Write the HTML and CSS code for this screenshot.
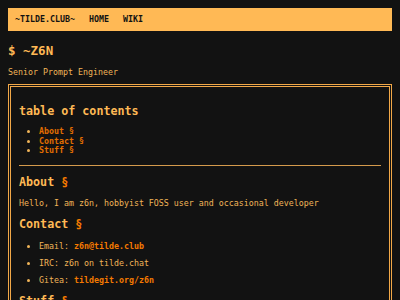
FILE: index.html
```html
<!DOCTYPE html>
<html lang="en">

<head>
    <meta charset="UTF-8">
    <meta name="viewport" content="width=device-width, initial-scale=1.0">
    <title>~z6n</title>
    <link rel="stylesheet" href="styles.css">
</head>

<body>
    <nav class="topbar">
        <a href="#">~tilde.club~</a>
        <a href="#">home</a>
        <a href="#">wiki</a>
    </nav>

    <h1 class="title">$ ~Z6N</h1>
    <p class="tagline">Senior Prompt Engineer</p>

    <main class="frame">
        <h2>table of contents</h2>
        <ul class="toc">
            <li><a href="#about">About §</a></li>
            <li><a href="#contact">Contact §</a></li>
            <li><a href="#stuff">Stuff §</a></li>
        </ul>

        <hr>

        <h2 id="about">About <a class="anchor" href="#about">§</a></h2>
        <p>Hello, I am z6n, hobbyist FOSS user and occasional developer</p>

        <h2 id="contact">Contact <a class="anchor" href="#contact">§</a></h2>
        <ul class="contact">
            <li>Email: <a href="#">z6n@tilde.club</a></li>
            <li>IRC: z6n on tilde.chat</li>
            <li>Gitea: <a href="#">tildegit.org/z6n</a></li>
        </ul>

        <h2 id="stuff">Stuff <a class="anchor" href="#stuff">§</a></h2>
        <p>Things I made or keep around.</p>
    </main>
</body>

</html>
```

FILE: styles.css
```css
:root {
    --background-color: #121212;
    --accent: #ffb955;
    --text-color: #f0b458;
    --link-color: #f57a00;
    --toc-link-color: #e26e00;
    --border-color: #f2a848;
    --rule-color: #d49a4c;
}

body {
    margin: 8px;
    background-color: var(--background-color);
    color: var(--text-color);
    font-family: "DejaVu Sans Mono", monospace;
    font-size: 8.3px;
}

a {
    color: var(--link-color);
    font-weight: bold;
    text-decoration: none;
}

.topbar {
    display: flex;
    gap: 14px;
    background-color: var(--accent);
    padding: 6px 7px 7px;
}

.topbar a {
    color: #111;
    text-transform: uppercase;
}

.title {
    color: var(--accent);
    font-size: 12.5px;
    margin: 11.5px 0 9px;
}

.tagline {
    margin: 0 0 7.5px;
}

.frame {
    border: 3px double var(--border-color);
    padding: 8px;
}

.frame h2 {
    color: var(--accent);
    font-size: 11.7px;
    margin: 9.2px 0;
}

.frame p {
    margin: 9.2px 0;
}

ul {
    padding-left: 20px;
    margin: 8.3px 0;
}

.toc {
    line-height: 9.4px;
    margin-bottom: 9.3px;
}

.toc a {
    color: var(--toc-link-color);
}

.contact li {
    margin: 7px 0;
}

hr {
    border: none;
    border-top: 1px solid var(--rule-color);
    margin: 8px 0;
}
```
